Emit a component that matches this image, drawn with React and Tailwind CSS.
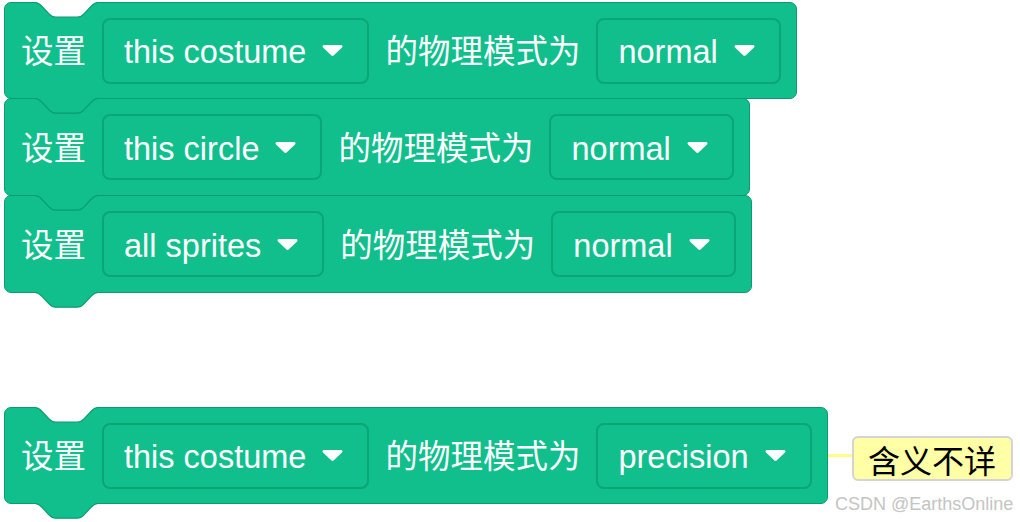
import React from "react";

const FONT = "font-['Liberation_Sans','Noto_Sans_CJK_SC',sans-serif]";
const CURVE =
  "M1,0.5 C4.5,0.5 6.25,2.4 8,4.3 L15,11.8 C16.75,13.7 18.5,15.2 22,15.2 H43 C46.5,15.2 48.25,13.7 50,11.8 L57,4.3 C58.75,2.4 60.5,0.5 64,0.5";

function Arrow() {
  return (
    <svg width="21" height="13" viewBox="0 0 21 13" className="shrink-0">
      <path
        d="M2,1 H19 C20.5,1 21,2.6 20,3.6 L11.6,11.5 C10.9,12.1 10.1,12.1 9.4,11.5 L1,3.6 C0,2.6 0.5,1 2,1 Z"
        fill="#ffffff"
      />
    </svg>
  );
}

function Dropdown({ label }) {
  return (
    <div className="flex h-[66px] items-center gap-[16px] rounded-[8px] border-2 border-[#0ca676] bg-[#10bf8c] pl-[20px] pr-[24px]">
      <span className="whitespace-nowrap pt-[4px]">{label}</span>
      <Arrow />
    </div>
  );
}

function Block({ target, mode, stacked }) {
  return (
    <div
      className={`relative flex items-center gap-[16px] rounded-[7px] border border-[#0b9b71] bg-[#10bf8c] pl-[16px] pr-[15px] text-[32.5px] leading-none text-white ${FONT} ${
        stacked ? "-mt-px h-[98px]" : "h-[97px]"
      }`}
    >
      {!stacked && (
        <svg
          width="65"
          height="17"
          viewBox="0 0 65 17"
          className="absolute left-[29px] top-[-1px] z-10 overflow-visible"
        >
          <path d={CURVE + " L64,-0.5 L1,-0.5 Z"} fill="#ffffff" />
          <path d={CURVE} fill="none" stroke="#0b9b71" strokeWidth="1.2" />
        </svg>
      )}
      <span className="whitespace-nowrap pt-[4px]">设置</span>
      <Dropdown label={target} />
      <span className="whitespace-nowrap pt-[4px]">的物理模式为</span>
      <Dropdown label={mode} />
      <svg
        width="65"
        height="17"
        viewBox="0 0 65 17"
        className="absolute left-[29px] top-full z-20 overflow-visible"
      >
        <path d={CURVE + " L64,-0.2 L1,-0.2 Z"} fill="#10bf8c" />
        <path d={CURVE} fill="none" stroke="#0b9b71" strokeWidth="1.2" />
      </svg>
    </div>
  );
}

export default function App() {
  return (
    <div className="relative h-[522px] w-[1020px] overflow-hidden bg-white pl-[4px] pt-[2px]">
      <div className="flex flex-col items-start">
        <Block target="this costume" mode="normal" />
        <Block target="this circle" mode="normal" stacked />
        <Block target="all sprites" mode="normal" stacked />
      </div>
      <div className="mt-[114px] flex items-center">
        <Block target="this costume" mode="precision" />
        <div className="h-[3px] w-[24px] bg-[#ffff88]" />
        <div className="mt-[6px] flex h-[45px] w-[161px] items-center justify-center rounded-[6px] border-2 border-[#d4d4d4] bg-[#ffffa6] font-['Noto_Sans_CJK_SC',sans-serif] text-[32px] leading-none text-black">
          含义不详
        </div>
      </div>
      <div className="absolute left-[835px] top-[495px] whitespace-nowrap font-['Liberation_Sans',sans-serif] text-[18px] leading-none text-[#c4c4c4]">
        CSDN @EarthsOnline
      </div>
    </div>
  );
}
